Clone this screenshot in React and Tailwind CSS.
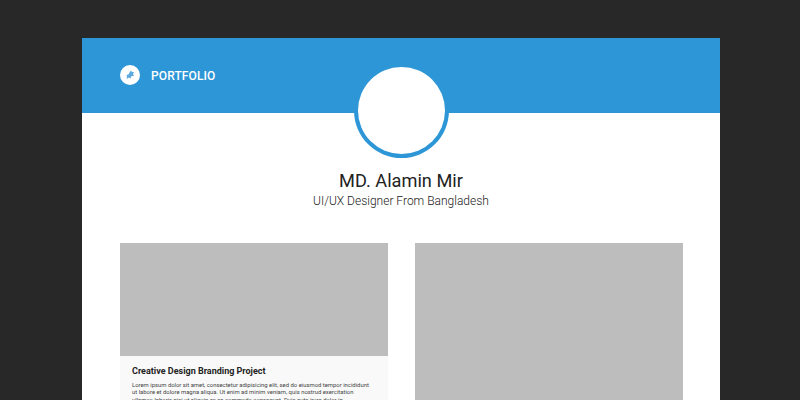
import React from "react";

const LOREM =
  "Lorem ipsum dolor sit amet, consectetur adipisicing elit, sed do eiusmod tempor incididunt ut labore et dolore magna aliqua. Ut enim ad minim veniam, quis nostrud exercitation ullamco laboris nisi ut aliquip ex ea commodo consequat. Duis aute irure dolor in reprehenderit in voluptate velit esse cillum.";

function Logo() {
  return (
    <div className="w-5 h-5 rounded-full bg-white flex items-center justify-center">
      <svg width="12" height="12" viewBox="0 0 12 12" fill="#5aa9e0">
        <path d="M7 1.5 L8 3 L10 3 L9 5 L10 7 L7.5 7 L6.5 9.5 L5 8.5 L2.5 10 L3 7.5 L2.5 6 L4.5 5.5 L5.5 3.5 Z" />
      </svg>
    </div>
  );
}

function ProjectCard({ title }) {
  return (
    <div className="w-[268px]">
      <div className="h-[113px] bg-[#bdbdbd]" />
      <div className="bg-[#f9f9f9] pl-[12px] pr-[16px] pt-[9px] pb-4">
        <h3 className="text-[9px] leading-[12px] font-bold text-[#222222]">{title}</h3>
        <p className="mt-[5px] text-[5.9px] leading-[7.4px] text-[#444444]">{LOREM}</p>
      </div>
    </div>
  );
}

export default function App() {
  return (
    <div className="h-[400px] overflow-hidden bg-[#282828] bg-[radial-gradient(#343434_0.7px,transparent_0.7px)] bg-[size:4px_4px] pt-[38px] font-['Roboto',sans-serif]">
      <div className="w-[638px] ml-[82px] bg-white min-h-[400px]">
        <header className="h-[75px] bg-[#2d96d6] flex items-center pl-[38px] gap-[11px]">
          <div className="mb-[2px]">
            <Logo />
          </div>
          <span className="text-white text-[12px] leading-[16px] font-medium tracking-[0.01em]">PORTFOLIO</span>
        </header>
        <div className="flex flex-col items-center">
          <div className="-mt-[50px] w-[95px] h-[95px] rounded-full bg-[#2d96d6] flex items-center justify-center">
            <div className="w-[87px] h-[87px] rounded-full bg-white" />
          </div>
          <h1 className="mt-[11px] text-[18.2px] leading-[24px] text-[#222222]">MD. Alamin Mir</h1>
          <p className="text-[12px] leading-[16px] font-light text-[#222222]">UI/UX Designer From Bangladesh</p>
        </div>
        <div className="flex gap-[27px] pl-[38px] mt-[34px]">
          <ProjectCard title="Creative Design Branding Project" />
          <div className="w-[268px] h-[300px] bg-[#bdbdbd]" />
        </div>
      </div>
    </div>
  );
}
